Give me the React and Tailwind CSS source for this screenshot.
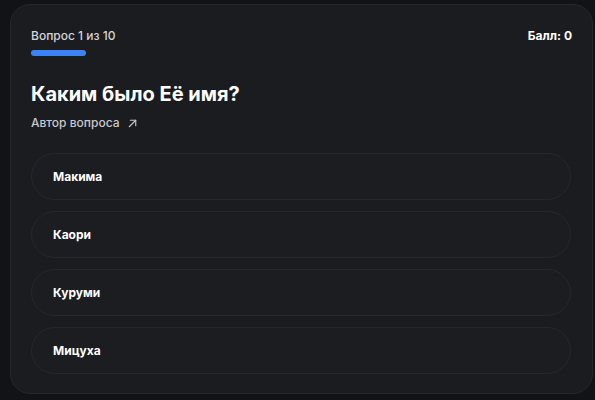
import React from 'react';

const options = ['Макима', 'Каори', 'Куруми', 'Мицуха'];

const App = () => {
  return (
    <div
      className="w-[595px] h-[400px] bg-[#121316] pt-[4px] pl-[10px] pr-[2px] overflow-hidden"
      style={{ fontFamily: 'Inter, "Noto Sans", sans-serif' }}
    >
      <div className="h-[390px] bg-[#1b1c20] border border-[#26272c] rounded-[20px] px-[20px] pt-[24px]">
        <div className="flex items-start justify-between">
          <div>
            <div className="text-[12px] leading-[14px] font-medium text-[#d4d5d9]">Вопрос 1 из 10</div>
            <div className="mt-[7px] w-[55px] h-[6px] rounded-full bg-[#3b82f6]" />
          </div>
          <div className="text-[12px] leading-[14px] font-bold text-white">Балл: 0</div>
        </div>

        <h2 className="mt-[26px] text-[20px] leading-[24px] font-bold text-white">Каким было Её имя?</h2>

        <div className="mt-[10px] flex items-center gap-[6px] text-[12px] leading-[14px] font-medium text-[#c8c9ce]">
          Автор вопроса
          <svg width="13" height="13" viewBox="0 0 24 24" fill="none" stroke="currentColor" strokeWidth="2" strokeLinecap="round" strokeLinejoin="round">
            <path d="M6 18 18 6" />
            <path d="M8 6h10v10" />
          </svg>
        </div>

        <div className="mt-[23px] flex flex-col gap-[11px] pr-[1px]">
          {options.map((opt) => (
            <button
              key={opt}
              className="h-[47px] w-full rounded-full border border-[#27282d] bg-[#1c1d21] px-[21px] text-left text-[12px] font-bold text-white"
            >
              {opt}
            </button>
          ))}
        </div>
      </div>
    </div>
  );
};

export default App;
